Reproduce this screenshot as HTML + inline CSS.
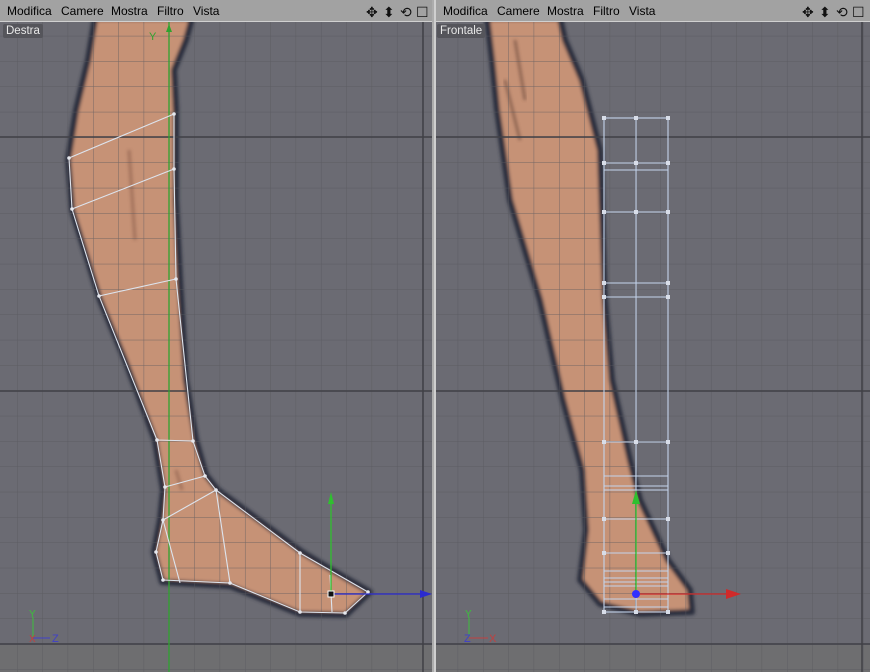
<!DOCTYPE html>
<html><head><meta charset="utf-8"><style>
body{margin:0;width:870px;height:672px;overflow:hidden;background:#c8c8c8;font-family:"Liberation Sans",sans-serif}
.menu{position:absolute;top:0;height:22px;background:#a2a2a2;font-size:12px;color:#000;border-bottom:1px solid #d0d0d0;box-sizing:border-box}
.menu span{position:absolute;top:4px}
.ic{position:absolute;top:3px;font-size:14px;color:#111}
.lbl{position:absolute;top:24px;font-size:11.5px;color:#e8e8e8;background:#55555b;padding:1px 3px;border-radius:2px}
</style></head><body>
<svg width="870" height="672" style="position:absolute;left:0;top:0">
<defs>
<pattern id="g1" x="17" y="10.5" width="25.33" height="25.33" patternUnits="userSpaceOnUse"><path d="M0 0V25.33M0 0H25.33" stroke="#57575d" stroke-width="1"/></pattern>
<pattern id="g2" x="483" y="10.5" width="25.33" height="25.33" patternUnits="userSpaceOnUse"><path d="M0 0V25.33M0 0H25.33" stroke="#57575d" stroke-width="1"/></pattern>
<filter id="bl" x="-10%" y="-10%" width="120%" height="120%"><feGaussianBlur stdDeviation="1.6"/></filter>
<clipPath id="c1"><rect x="0" y="22" width="432" height="650"/></clipPath>
<clipPath id="c2"><rect x="436" y="22" width="434" height="650"/></clipPath>
</defs>
<g clip-path="url(#c1)">
<rect x="0" y="22" width="432" height="650" fill="#6b6b73"/>
<rect x="0" y="645" width="432" height="27" fill="#6e6e70"/>
<g filter="url(#bl)">
<path d="M95 18 L88 60 L76 110 L68 160 L72 210 L100 300 L125 360 L155 440 L163 490 L160 520 L154 552 L162 582 L230 586 L300 614 L346 615 L370 592 L332 570 L302 552 L218 490 L206 475 L196 440 L186 380 L180 280 L176 200 L176 110 L174 70 L186 40 L192 18Z" fill="#c69276" stroke="#2a2e3c" stroke-width="6" stroke-linejoin="round"/>
</g>
<path d="M129 150 L135 240 M176 470 L182 490" stroke="#7a5040" stroke-width="3" opacity=".5" filter="url(#bl)"/>
<rect x="0" y="22" width="432" height="650" fill="url(#g1)" opacity=".75"/>
<path d="M0 137H432M0 391H432M0 644H432M423 22V672" stroke="#404046" stroke-width="1.5"/>
<line x1="169" y1="22" x2="169" y2="672" stroke="#2fa32f" stroke-width="1.3"/>
<path d="M166 32 L169 24 L172 32Z" fill="#2fa32f"/>
<text x="149" y="40" font-size="11" fill="#2fa32f" font-family="Liberation Sans">Y</text>
<g stroke="#dde4ee" stroke-width="1.1" fill="none">
<path d="M69 158 L174 114 M72 209 L174 169 M99 296 L176 279 M69 158 L72 209 L99 296 L157 440 M174 114 L174 169 L176 279 L193 441 M157 440 L193 441 M157 440 L165 487 L163 520 L156 552 L163 580 L230 583 L300 612 L345 613 L368 592 L300 553 L216 490 L205 476 L193 441 M165 487 L205 476 M163 520 L216 490 M163 520 L180 583 M216 490 L230 583 M300 553 L300 612 M330 575 L332 612"/>
</g>
<g fill="#e6e8ee"><circle cx="69" cy="158" r="1.8"/><circle cx="174" cy="114" r="1.8"/><circle cx="72" cy="209" r="1.8"/><circle cx="174" cy="169" r="1.8"/><circle cx="99" cy="296" r="1.8"/><circle cx="176" cy="279" r="1.8"/><circle cx="157" cy="440" r="1.8"/><circle cx="193" cy="441" r="1.8"/><circle cx="165" cy="487" r="1.8"/><circle cx="205" cy="476" r="1.8"/><circle cx="216" cy="490" r="1.8"/><circle cx="163" cy="520" r="1.8"/><circle cx="156" cy="552" r="1.8"/><circle cx="163" cy="580" r="1.8"/><circle cx="230" cy="583" r="1.8"/><circle cx="300" cy="553" r="1.8"/><circle cx="300" cy="612" r="1.8"/><circle cx="345" cy="613" r="1.8"/><circle cx="368" cy="592" r="1.8"/></g>
<line x1="331" y1="594" x2="331" y2="498" stroke="#2fc02f" stroke-width="1.3"/>
<path d="M328 504 L331 492 L334 504Z" fill="#2fc02f"/>
<line x1="331" y1="594" x2="425" y2="594" stroke="#2a2ad0" stroke-width="1.3"/>
<path d="M420 590 L432 594 L420 598Z" fill="#2a2ad0"/>
<rect x="328" y="591" width="6" height="6" fill="#111" stroke="#fff" stroke-width="1"/>
<line x1="33" y1="637" x2="33" y2="617" stroke="#3cbf3c"/>
<text x="29" y="617" font-size="10" fill="#3cbf3c">Y</text>
<line x1="33" y1="638" x2="50" y2="638" stroke="#4040c8"/>
<text x="52" y="642" font-size="11" fill="#4040c8">Z</text>
<text x="29" y="642" font-size="10" fill="#c04040">X</text>
</g>
<g clip-path="url(#c2)">
<rect x="436" y="22" width="434" height="650" fill="#6b6b73"/>
<rect x="436" y="645" width="434" height="27" fill="#6e6e70"/>
<g filter="url(#bl)">
<path d="M487 18 L492 60 L497 110 L510 200 L540 300 L563 400 L582 470 L586 530 L580 580 L600 604 L640 614 L692 612 L690 590 L668 560 L640 500 L630 460 L612 380 L605 300 L600 150 L582 80 L565 40 L560 18Z" fill="#c69276" stroke="#2a2e3c" stroke-width="6" stroke-linejoin="round"/>
</g>
<path d="M515 40 L525 100 M505 80 L520 140" stroke="#5a3a30" stroke-width="2.5" opacity=".6" filter="url(#bl)"/>
<rect x="436" y="22" width="434" height="650" fill="url(#g2)" opacity=".75"/>
<path d="M436 137H870M436 391H870M436 644H870M862 22V672" stroke="#404046" stroke-width="1.5"/>
<g stroke="#c4d4ec" stroke-width="1.1" fill="none">
<rect x="604" y="118" width="64" height="494"/>
<line x1="636" y1="118" x2="636" y2="612"/>
<path d="M604 163H668M604 170H668M604 212H668M604 283H668M604 297H668M604 442H668M604 476H668M604 486H668M604 490H668M604 519H668M604 553H668M604 571H668M604 578H668M604 582H668M604 586H668M604 599H668M604 607H668"/>
</g>
<g fill="#d8dde8">
<rect x="602" y="116" width="4" height="4"/><rect x="634" y="116" width="4" height="4"/><rect x="666" y="116" width="4" height="4"/>
<rect x="602" y="161" width="4" height="4"/><rect x="666" y="161" width="4" height="4"/><rect x="634" y="161" width="4" height="4"/>
<rect x="602" y="210" width="4" height="4"/><rect x="634" y="210" width="4" height="4"/><rect x="666" y="210" width="4" height="4"/>
<rect x="602" y="281" width="4" height="4"/><rect x="666" y="281" width="4" height="4"/><rect x="602" y="295" width="4" height="4"/><rect x="666" y="295" width="4" height="4"/>
<rect x="602" y="440" width="4" height="4"/><rect x="634" y="440" width="4" height="4"/><rect x="666" y="440" width="4" height="4"/>
<rect x="602" y="517" width="4" height="4"/><rect x="666" y="517" width="4" height="4"/><rect x="602" y="551" width="4" height="4"/><rect x="666" y="551" width="4" height="4"/>
<rect x="602" y="610" width="4" height="4"/><rect x="634" y="610" width="4" height="4"/><rect x="666" y="610" width="4" height="4"/>
</g>
<line x1="636" y1="594" x2="636" y2="500" stroke="#2fc02f" stroke-width="1.3"/>
<path d="M632 504 L636 490 L640 504Z" fill="#2fc02f"/>
<line x1="636" y1="594" x2="730" y2="594" stroke="#d02a2a" stroke-width="1.3"/>
<path d="M726 589 L741 594 L726 599Z" fill="#d02a2a"/>
<circle cx="636" cy="594" r="4" fill="#3030ff"/>
<line x1="469" y1="637" x2="469" y2="617" stroke="#3cbf3c"/>
<text x="465" y="617" font-size="10" fill="#3cbf3c">Y</text>
<line x1="469" y1="638" x2="488" y2="638" stroke="#c04040"/>
<text x="489" y="642" font-size="11" fill="#c04040">X</text>
<text x="464" y="642" font-size="11" fill="#4040c8">Z</text>
</g>
<rect x="432" y="0" width="4" height="672" fill="#cfcfcf"/>
<line x1="433" y1="0" x2="433" y2="672" stroke="#888"/>
</svg>
<div class="menu" style="left:0;width:432px"><span style="left:7px">Modifica</span><span style="left:61px">Camere</span><span style="left:111px">Mostra</span><span style="left:157px">Filtro</span><span style="left:193px">Vista</span><span class="ic" style="left:366px">✥</span><span class="ic" style="left:383px">⬍</span><span class="ic" style="left:400px">⟲</span><span class="ic" style="left:416px">☐</span></div>
<div class="menu" style="left:436px;width:434px"><span style="left:7px">Modifica</span><span style="left:61px">Camere</span><span style="left:111px">Mostra</span><span style="left:157px">Filtro</span><span style="left:193px">Vista</span><span class="ic" style="left:366px">✥</span><span class="ic" style="left:383px">⬍</span><span class="ic" style="left:400px">⟲</span><span class="ic" style="left:416px">☐</span></div>
<div class="lbl" style="left:3px">Destra</div>
<div class="lbl" style="left:437px">Frontale</div>
</body></html>
